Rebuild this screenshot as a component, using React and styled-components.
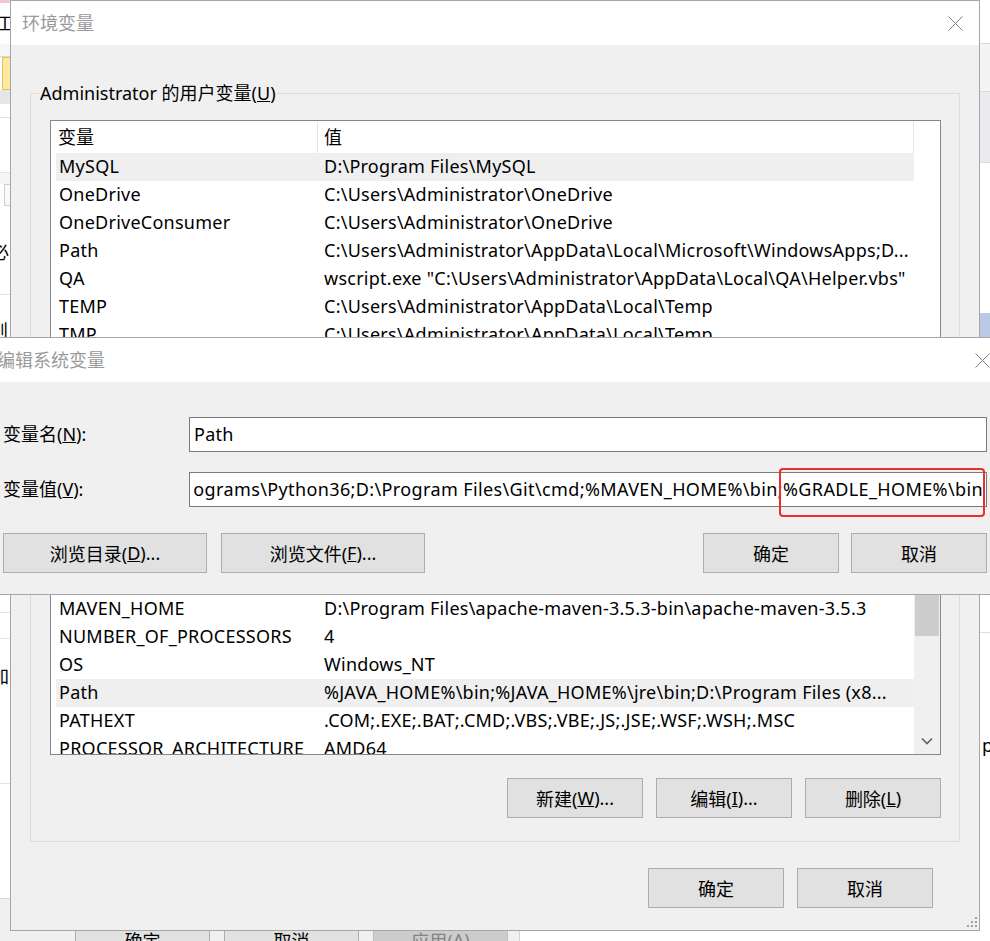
import React from 'react';
import styled, { createGlobalStyle } from 'styled-components';

const UI_FONT = `"Noto Sans", "Noto Sans CJK SC", sans-serif`;

const GlobalStyle = createGlobalStyle`
  html, body { margin: 0; padding: 0; background: #ffffff; }
  body { font-family: ${UI_FONT}; font-size: 18px; color: #000; }
  * { box-sizing: border-box; }
`;

const Desktop = styled.div`
  position: relative;
  width: 990px;
  height: 941px;
  overflow: hidden;
  background: #ffffff;
  font-family: ${UI_FONT};
  font-size: 18px;
`;

/* ---------- background application ---------- */
const BackApp = styled.div`
  display: flex;
  width: 100%;
  height: 100%;
`;
const BackLeft = styled.div`
  width: 520px;
  display: flex;
  flex-direction: column;
  border-right: 1px solid #d4d4d4;
`;
const BackLeftTop = styled.div`
  flex: 1;
  display: flex;
  flex-direction: column;
  overflow: hidden;
`;
const StripBand = styled.div`
  flex: none;
  width: 10px;
  height: ${p => p.$h}px;
  background: ${p => p.$bg || '#fff'};
  border-bottom: ${p => (p.$line ? `1px solid ${p.$line}` : 'none')};
`;
const StripBox = styled.div`
  flex: none;
  width: ${p => 10 - p.$ml}px;
  height: ${p => p.$h}px;
  margin-left: ${p => p.$ml}px;
  background: ${p => p.$bg};
  border: 1px solid ${p => p.$bc};
  border-right: none;
`;
const StripGlyph = styled.div`
  flex: none;
  height: ${p => p.$h}px;
  line-height: ${p => p.$h}px;
  margin-left: ${p => p.$shift}px;
  color: ${p => p.$color || '#000'};
  white-space: nowrap;
`;
const BackFooter = styled.div`
  flex: none;
  height: 43px;
  display: flex;
  gap: 14px;
  padding: 21px 0 0 75px;
  background: #f0f0f0;
  border-top: 1px solid #d6d6d6;
`;
const BackButton = styled.div`
  flex: none;
  width: 135px;
  height: 40px;
  display: flex;
  align-items: center;
  justify-content: center;
  background: ${p => (p.$disabled ? '#cccccc' : '#e1e1e1')};
  border: 1px solid ${p => (p.$disabled ? '#bfbfbf' : '#adadad')};
  color: ${p => (p.$disabled ? '#838383' : '#000')};
`;
const BackRight = styled.div`
  flex: 1;
  display: flex;
  flex-direction: column;
  align-items: flex-end;
  overflow: hidden;
`;
const RightBand = styled.div`
  flex: none;
  width: 11px;
  height: ${p => p.$h}px;
  background: ${p => p.$bg || '#fff'};
  border-bottom: ${p => (p.$line ? `1px solid ${p.$line}` : 'none')};
`;
const RightGlyph = styled.div`
  flex: none;
  width: 11px;
  height: ${p => p.$h}px;
  line-height: ${p => p.$h}px;
  padding-left: 3px;
  overflow: hidden;
`;

/* ---------- windows ---------- */
const Window = styled.section`
  position: absolute;
  left: ${p => p.$x}px;
  top: ${p => p.$y}px;
  width: ${p => p.$w}px;
  height: ${p => p.$h}px;
  display: flex;
  flex-direction: column;
  background: #f0f0f0;
  border: 1px solid #a6a6a6;
`;
const TitleBar = styled.header`
  flex: none;
  height: 44px;
  display: flex;
  align-items: center;
  padding-left: ${p => p.$pad ?? 11}px;
  background: #ffffff;
`;
const TitleText = styled.div`
  flex: 1;
  color: #9a9a9a;
  white-space: nowrap;
  line-height: 42px;
`;
const CloseButton = styled.div`
  flex: none;
  width: 48px;
  height: 44px;
  display: flex;
  align-items: center;
  justify-content: center;
`;

const EnvBody = styled.div`
  flex: 1;
  display: flex;
  flex-direction: column;
  padding: 48px 19px 22px 19px;
`;
const GroupBox = styled.div`
  position: relative;
  flex: none;
  display: flex;
  flex-direction: column;
  border: 1px solid #dcdcdc;
  padding: 26px 18px 23px 19px;
`;
const GroupLabel = styled.div`
  position: absolute;
  top: -14px;
  left: 8px;
  padding: 0 1px;
  line-height: 26px;
  background: #f0f0f0;
  white-space: nowrap;
`;

const ListView = styled.div`
  flex: none;
  display: flex;
  height: ${p => p.$h}px;
  margin-top: ${p => p.$mt || 0}px;
  background: #ffffff;
  border: 1px solid #828790;
  overflow: hidden;
`;
const ListContent = styled.div`
  flex: 1;
  min-width: 0;
  display: flex;
  flex-direction: column;
  padding-left: 5px;
`;
const ListHeader = styled.div`
  flex: none;
  display: grid;
  grid-template-columns: 262px minmax(0, 1fr);
  height: 31px;
  margin-top: 1px;
`;
const HeaderCell = styled.div`
  padding-left: ${p => p.$pad}px;
  line-height: 30px;
  border-right: 1px solid #e5e5e5;
  white-space: nowrap;
`;
const ListRow = styled.div`
  flex: none;
  display: grid;
  grid-template-columns: 262px minmax(0, 1fr);
  height: 28px;
  line-height: 27px;
  background: ${p => (p.$hl ? '#efefef' : 'transparent')};
`;
const Cell = styled.div`
  padding-left: ${p => p.$pad}px;
  white-space: nowrap;
  overflow: hidden;
  letter-spacing: 0.25px;
`;
const ScrollTrack = styled.div`
  flex: none;
  width: 26px;
  display: flex;
  flex-direction: column;
  background: ${p => (p.$show ? '#f0f0f0' : '#ffffff')};
`;
const ScrollThumb = styled.div`
  flex: none;
  height: 41px;
  margin: 0 1px;
  background: #cdcdcd;
`;
const ScrollArrow = styled.div`
  flex: none;
  margin-top: auto;
  height: 26px;
  display: flex;
  align-items: center;
  justify-content: center;
`;

const ButtonRow = styled.div`
  flex: none;
  display: flex;
  justify-content: ${p => p.$justify || 'flex-end'};
  gap: ${p => p.$gap || 0}px;
  margin-top: ${p => p.$mt || 0}px;
  padding-right: ${p => p.$pr || 0}px;
`;
const ButtonGroup = styled.div`
  display: flex;
  gap: ${p => p.$gap}px;
`;
const Button = styled.div`
  flex: none;
  width: ${p => p.$w}px;
  height: 40px;
  display: flex;
  align-items: center;
  justify-content: center;
  background: #e1e1e1;
  border: 1px solid #adadad;
  white-space: nowrap;
`;
const Grip = styled.svg`
  position: absolute;
  right: 1px;
  bottom: 2px;
`;

/* edit dialog */
const EditBody = styled.div`
  flex: 1;
  display: flex;
  flex-direction: column;
  padding: 35px 19px 21px 15px;
`;
const FieldRow = styled.div`
  flex: none;
  display: grid;
  grid-template-columns: 186px minmax(0, 1fr);
  align-items: center;
  margin-top: ${p => p.$mt || 0}px;
`;
const FieldLabel = styled.div`
  line-height: 35px;
  white-space: nowrap;
`;
const FieldBox = styled.div`
  position: relative;
  min-width: 0;
`;
const TextBox = styled.div`
  height: 35px;
  display: flex;
  align-items: center;
  justify-content: ${p => (p.$end ? 'flex-end' : 'flex-start')};
  padding: 0 3px 2px ${p => (p.$end ? 2 : 4)}px;
  background: #ffffff;
  border: 1px solid #7a7a7a;
  overflow: clip;
`;
const TextValue = styled.span`
  flex: none;
  white-space: nowrap;
  letter-spacing: ${p => (p.$wide ? 0.38 : 0.25)}px;
`;
const RedMark = styled.div`
  position: absolute;
  top: -4px;
  right: 2px;
  width: 206px;
  height: 49px;
  border: 2px solid #e8302c;
  border-radius: 4px;
  pointer-events: none;
`;

const CloseIcon = () => (
  <svg width="15" height="15" viewBox="0 0 15 15">
    <path d="M0.5 0.5 L14.5 14.5 M14.5 0.5 L0.5 14.5" stroke="#808080" strokeWidth="1" fill="none" />
  </svg>
);

const userVars = [
  ['MySQL', 'D:\\Program Files\\MySQL', true],
  ['OneDrive', 'C:\\Users\\Administrator\\OneDrive'],
  ['OneDriveConsumer', 'C:\\Users\\Administrator\\OneDrive'],
  ['Path', 'C:\\Users\\Administrator\\AppData\\Local\\Microsoft\\WindowsApps;D...'],
  ['QA', 'wscript.exe "C:\\Users\\Administrator\\AppData\\Local\\QA\\Helper.vbs"'],
  ['TEMP', 'C:\\Users\\Administrator\\AppData\\Local\\Temp'],
  ['TMP', 'C:\\Users\\Administrator\\AppData\\Local\\Temp'],
];

const sysVars = [
  ['MAVEN_HOME', 'D:\\Program Files\\apache-maven-3.5.3-bin\\apache-maven-3.5.3'],
  ['NUMBER_OF_PROCESSORS', '4'],
  ['OS', 'Windows_NT'],
  ['Path', '%JAVA_HOME%\\bin;%JAVA_HOME%\\jre\\bin;D:\\Program Files (x8...', true],
  ['PATHEXT', '.COM;.EXE;.BAT;.CMD;.VBS;.VBE;.JS;.JSE;.WSF;.WSH;.MSC'],
  ['PROCESSOR_ARCHITECTURE', 'AMD64'],
];

/* the part of the (scrolled) Path value that is visible in the box */
const PATH_VISIBLE =
  'ograms\\Python36;D:\\Program Files\\Git\\cmd;%MAVEN_HOME%\\bin;%GRADLE_HOME%\\bin';

const Rows = ({ data }) =>
  data.map(([name, value, hl]) => (
    <ListRow key={name + value} $hl={hl}>
      <Cell $pad={3}>{name}</Cell>
      <Cell $pad={6}>{value}</Cell>
    </ListRow>
  ));

export default function App() {
  return (
    <Desktop>
      <GlobalStyle />
      <BackApp>
        <BackLeft>
          <BackLeftTop>
            <StripBand $h={3} $bg="#f3c4d7" />
            <StripGlyph $h={41} $shift={-4}>工</StripGlyph>
            <StripBand $h={13} $bg="#f6f6f6" $line="#d8d8d8" />
            <StripBox $h={33} $ml={2} $bg="#fde8a2" $bc="#e7c160" />
            <StripBand $h={14} $bg="#e6e6e6" />
            <StripBand $h={14} $line="#e0e0e0" />
            <StripBand $h={55} $line="#e3e3e3" />
            <StripBand $h={11} $bg="#f5f5f5" />
            <StripBox $h={22} $ml={4} $bg="#fafafa" $bc="#cfcfcf" />
            <StripBand $h={32} />
            <StripGlyph $h={28} $shift={-9}>必</StripGlyph>
            <StripBand $h={29} $line="#e0e0e0" />
            <StripBand $h={23} />
            <StripGlyph $h={26} $shift={-10}>则</StripGlyph>
            <StripBand $h={269} $line="#e3e3e3" />
            <StripBand $h={26} $line="#e3e3e3" />
            <StripBand $h={24} />
            <StripGlyph $h={26} $shift={-9}>加</StripGlyph>
            <StripBand $h={95} $line="#e3e3e3" />
          </BackLeftTop>
          <BackFooter>
            <BackButton>确定</BackButton>
            <BackButton>取消</BackButton>
            <BackButton $disabled>
              应用(<u>A</u>)
            </BackButton>
          </BackFooter>
        </BackLeft>
        <BackRight>
          <RightBand $h={44} $line="#d9d9d9" />
          <RightBand $h={48} $bg="#f4f4f4" $line="#d9d9d9" />
          <RightBand $h={71} $bg="#e9ebef" $line="#dcdcdc" />
          <RightBand $h={150} />
          <RightBand $h={40} $bg="#b9c8e4" />
          <RightBand $h={280} $line="#dedede" />
          <RightBand $h={99} />
          <RightGlyph $h={26}>p</RightGlyph>
        </BackRight>
      </BackApp>

      <Window $x={10} $y={0} $w={970} $h={931}>
        <TitleBar>
          <TitleText>环境变量</TitleText>
          <CloseButton>
            <CloseIcon />
          </CloseButton>
        </TitleBar>
        <EnvBody>
          <GroupBox>
            <GroupLabel>
              Administrator 的用户变量(<u>U</u>)
            </GroupLabel>
            <ListView $h={260}>
              <ListContent>
                <ListHeader>
                  <HeaderCell $pad={2}>变量</HeaderCell>
                  <HeaderCell $pad={6}>值</HeaderCell>
                </ListHeader>
                <Rows data={userVars} />
              </ListContent>
              <ScrollTrack />
            </ListView>
            <ListView $h={161} $mt={214}>
              <ListContent>
                <Rows data={sysVars} />
              </ListContent>
              <ScrollTrack $show>
                <ScrollThumb />
                <ScrollArrow>
                  <svg width="12" height="8" viewBox="0 0 12 8">
                    <path d="M1 1.5 L6 6.5 L11 1.5" stroke="#606060" strokeWidth="1.6" fill="none" />
                  </svg>
                </ScrollArrow>
              </ScrollTrack>
            </ListView>
            <ButtonRow $mt={23} $gap={13}>
              <Button $w={136}>
                新建(<u>W</u>)...
              </Button>
              <Button $w={136}>
                编辑(<u>I</u>)...
              </Button>
              <Button $w={136}>
                删除(<u>L</u>)
              </Button>
            </ButtonRow>
          </GroupBox>
          <ButtonRow $mt={26} $gap={13} $pr={27}>
            <Button $w={136}>确定</Button>
            <Button $w={136}>取消</Button>
          </ButtonRow>
        </EnvBody>
        <Grip width="12" height="12" viewBox="0 0 12 12">
          <g fill="#a0a0a0">
            <rect x="9" y="1" width="2" height="2" />
            <rect x="5" y="5" width="2" height="2" />
            <rect x="9" y="5" width="2" height="2" />
            <rect x="1" y="9" width="2" height="2" />
            <rect x="5" y="9" width="2" height="2" />
            <rect x="9" y="9" width="2" height="2" />
          </g>
        </Grip>
      </Window>

      <Window $x={-13} $y={337} $w={1020} $h={258}>
        <TitleBar $pad={9}>
          <TitleText>编辑系统变量</TitleText>
          <CloseButton>
            <CloseIcon />
          </CloseButton>
        </TitleBar>
        <EditBody>
          <FieldRow>
            <FieldLabel>
              变量名(<u>N</u>):
            </FieldLabel>
            <FieldBox>
              <TextBox>
                <TextValue>Path</TextValue>
              </TextBox>
            </FieldBox>
          </FieldRow>
          <FieldRow $mt={20}>
            <FieldLabel>
              变量值(<u>V</u>):
            </FieldLabel>
            <FieldBox>
              <TextBox $end>
                <TextValue $wide>{PATH_VISIBLE}</TextValue>
              </TextBox>
              <RedMark />
            </FieldBox>
          </FieldRow>
          <ButtonRow $mt={26} $justify="space-between">
            <ButtonGroup $gap={14}>
              <Button $w={204}>
                浏览目录(<u>D</u>)...
              </Button>
              <Button $w={204}>
                浏览文件(<u>F</u>)...
              </Button>
            </ButtonGroup>
            <ButtonGroup $gap={12}>
              <Button $w={136}>确定</Button>
              <Button $w={136}>取消</Button>
            </ButtonGroup>
          </ButtonRow>
        </EditBody>
      </Window>
    </Desktop>
  );
}
